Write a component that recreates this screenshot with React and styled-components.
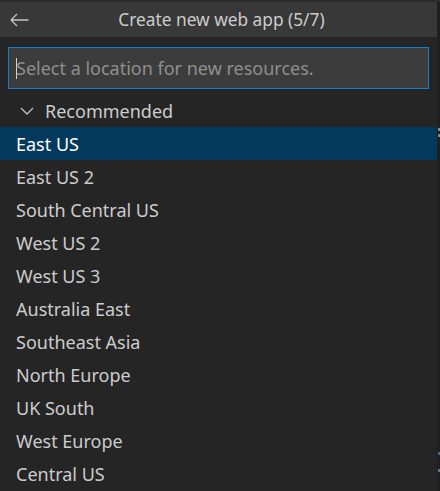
import React from "react";
import styled, { createGlobalStyle } from "styled-components";

const Global = createGlobalStyle`
  html, body { margin: 0; padding: 0; background: #252526; }
  body { font-family: "Noto Sans", "Open Sans", sans-serif; }
`;

const Frame = styled.div`
  width: 440px;
  height: 491px;
  display: flex;
  flex-direction: column;
  background: #252526;
  overflow: hidden;
`;

const TopEdge = styled.div`
  height: 2px;
  background: #2b2b2b;
  flex: none;
`;

const Body = styled.div`
  flex: 1;
  display: flex;
  min-height: 0;
`;

const Panel = styled.div`
  width: 437px;
  display: flex;
  flex-direction: column;
  background: #252526;
`;

const Ruler = styled.div`
  width: 3px;
  background: #1f1f1f;
  position: relative;
`;

const Mark = styled.div`
  position: absolute;
  left: 1px;
  width: 2px;
  height: ${(p) => p.$h}px;
  top: ${(p) => p.$top}px;
  background: ${(p) => p.$color};
`;

const Header = styled.div`
  height: 35px;
  background: #383838;
  display: grid;
  grid-template-columns: 40px 1fr 34px;
  align-items: center;
  color: #cccccc;
  font-size: 17.3px;
`;

const Back = styled.div`
  display: flex;
  align-items: center;
  justify-content: flex-start;
  padding-left: 10px;
`;

const Title = styled.div`
  text-align: center;
`;

const InputWrap = styled.div`
  padding: 10px 8px 5px 8px;
`;

const Input = styled.div`
  height: 40px;
  border: 1px solid #0e7fd3;
  background: #3c3c3c;
  display: flex;
  align-items: center;
  padding-left: 7px;
  font-size: 18px;
  color: #8f8f8f;
`;

const Caret = styled.span`
  display: inline-block;
  width: 1px;
  height: 21px;
  background: #d4d4d4;
  margin-right: -1px;
`;

const Group = styled.div`
  height: 33px;
  display: flex;
  align-items: center;
  padding-left: 20px;
  gap: 11px;
  color: #cccccc;
  font-size: 18px;
`;

const Item = styled.div`
  height: 33px;
  display: flex;
  align-items: center;
  padding-left: 16px;
  font-size: 18px;
  color: ${(p) => (p.$selected ? "#ffffff" : "#cccccc")};
  background: ${(p) => (p.$selected ? "#04395e" : "transparent")};
`;

const items = [
  "East US",
  "East US 2",
  "South Central US",
  "West US 2",
  "West US 3",
  "Australia East",
  "Southeast Asia",
  "North Europe",
  "UK South",
  "West Europe",
  "Central US",
];

export default function App() {
  return (
    <>
      <Global />
      <Frame>
        <TopEdge />
        <Body>
          <Panel>
            <Header>
              <Back>
                <svg width="19" height="14" viewBox="0 0 19 14" fill="none">
                  <path d="M1 7H18.5M1 7L7 1M1 7L7 13" stroke="#c5c5c5" strokeWidth="1.3" />
                </svg>
              </Back>
              <Title>Create new web app (5/7)</Title>
              <div />
            </Header>
            <InputWrap>
              <Input>
                <Caret />
                Select a location for new resources.
              </Input>
            </InputWrap>
            <Group>
              <svg width="14" height="8" viewBox="0 0 14 8" fill="none">
                <path d="M1 1L7 7L13 1" stroke="#c5c5c5" strokeWidth="1.3" />
              </svg>
              Recommended
            </Group>
            {items.map((t, i) => (
              <Item key={t} $selected={i === 0}>
                {t}
              </Item>
            ))}
          </Panel>
          <Ruler>
            <Mark $top={126} $h={3} $color="#8a8a8a" />
            <Mark $top={132} $h={3} $color="#8a8a8a" />
            <Mark $top={450} $h={3} $color="#4a6a8a" />
            <Mark $top={467} $h={3} $color="#5a7a9a" />
          </Ruler>
        </Body>
      </Frame>
    </>
  );
}
